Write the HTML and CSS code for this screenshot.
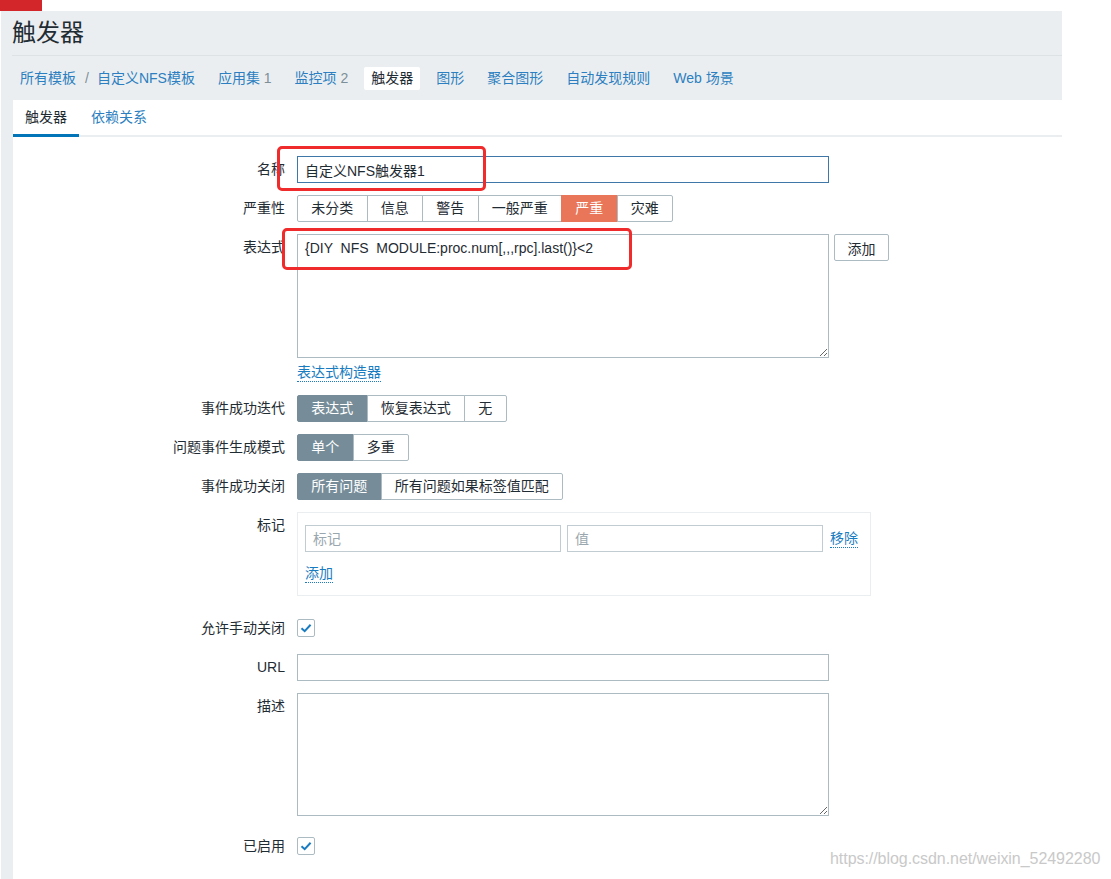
FILE: index.html
```html
<!DOCTYPE html>
<html lang="zh-CN">
<head>
<meta charset="utf-8">
<title>触发器</title>
<link rel="stylesheet" href="styles.css">
</head>
<body>
<div class="redmark"></div>
<div class="page">
  <header class="head"><h1>触发器</h1></header>
  <nav class="nav">
    <span class="navitem crumbs"><a>所有模板</a><span class="sep">/</span><a>自定义NFS模板</a></span>
    <a class="navitem">应用集 <span class="cnt">1</span></a>
    <a class="navitem">监控项 <span class="cnt">2</span></a>
    <a class="navitem sel">触发器</a>
    <a class="navitem">图形</a>
    <a class="navitem">聚合图形</a>
    <a class="navitem">自动发现规则</a>
    <a class="navitem">Web 场景</a>
  </nav>
  <main class="content">
    <div class="tabs">
      <span class="tab active">触发器</span>
      <span class="tab">依赖关系</span>
    </div>
    <form class="form">
      <label class="lbl">名称</label>
      <div class="ctl"><input class="inp focus" type="text" value="自定义NFS触发器1"></div>

      <label class="lbl">严重性</label>
      <div class="ctl"><div class="seg">
        <span>未分类</span><span>信息</span><span>警告</span><span>一般严重</span><span class="high">严重</span><span>灾难</span>
      </div></div>

      <label class="lbl">表达式</label>
      <div class="ctl">
        <div class="exprrow">
          <textarea class="ta expr">{DIY  NFS  MODULE:proc.num[,,,rpc].last()}&lt;2</textarea>
          <button type="button" class="btn">添加</button>
        </div>
        <a class="link builder">表达式构造器</a>
      </div>

      <label class="lbl">事件成功迭代</label>
      <div class="ctl"><div class="seg">
        <span class="on">表达式</span><span>恢复表达式</span><span>无</span>
      </div></div>

      <label class="lbl">问题事件生成模式</label>
      <div class="ctl"><div class="seg">
        <span class="on">单个</span><span>多重</span>
      </div></div>

      <label class="lbl">事件成功关闭</label>
      <div class="ctl"><div class="seg">
        <span class="on">所有问题</span><span>所有问题如果标签值匹配</span>
      </div></div>

      <label class="lbl">标记</label>
      <div class="ctl tagctl">
        <div class="tagbox">
          <div class="tagrow">
            <input class="inp tag" type="text" placeholder="标记">
            <input class="inp tag" type="text" placeholder="值">
            <a class="link">移除</a>
          </div>
          <a class="link add">添加</a>
        </div>
      </div>

      <label class="lbl">允许手动关闭</label>
      <div class="ctl"><span class="chk"><svg viewBox="0 0 16 16" width="16" height="16"><path d="M3.5 8.2 L6.7 11.2 L12.6 4.8" fill="none" stroke="#1a7cc0" stroke-width="2"/></svg></span></div>

      <label class="lbl">URL</label>
      <div class="ctl"><input class="inp" type="text"></div>

      <label class="lbl">描述</label>
      <div class="ctl"><textarea class="ta desc"></textarea></div>

      <label class="lbl push">已启用</label>
      <div class="ctl push"><span class="chk"><svg viewBox="0 0 16 16" width="16" height="16"><path d="M3.5 8.2 L6.7 11.2 L12.6 4.8" fill="none" stroke="#1a7cc0" stroke-width="2"/></svg></span></div>
    </form>
  </main>
</div>
<div class="annot a1"></div>
<div class="annot a2"></div>
<div class="watermark">https://blog.csdn.net/weixin_52492280</div>
</body>
</html>
```

FILE: styles.css
```css
* { box-sizing: border-box; }
html, body { margin: 0; padding: 0; background: #ffffff; }
body {
  font-family: "Liberation Sans", "Noto Sans CJK SC", sans-serif;
  font-size: 14px;
  color: #1f2c33;
  width: 1111px;
  height: 879px;
  overflow: hidden;
  position: relative;
}
.redmark { width: 42px; height: 11px; background: #d3262a; }
.page {
  width: 1061px;
  margin-left: 1px;
  background: #ebeef0;
  height: 868px;
  display: flex;
  flex-direction: column;
}
.head { margin-left: 11px; border-bottom: 1px solid #dde2e5; }
.head h1 {
  margin: 0;
  font-size: 24px;
  font-weight: normal;
  line-height: 44px;
  height: 44px;
  color: #1f2c33;
}
.nav {
  height: 44px;
  padding-left: 12px;
  display: flex;
  align-items: center;
  gap: 9px;
}
.navitem {
  padding: 0 7px;
  height: 23px;
  line-height: 23px;
  color: #2c7fc0;
  border-radius: 2px;
  white-space: nowrap;
}
.navitem .cnt { color: #7d8f99; }
.crumbs .sep { color: #7d8f99; margin: 0 8px 0 9px; }
.navitem.sel { background: #ffffff; color: #1f2c33; }
.content {
  margin-left: 12px;
  background: #ffffff;
  flex: 1;
}
.tabs {
  height: 37px;
  border-bottom: 2px solid #ebeef0;
  display: flex;
}
.tab {
  padding: 0 12px;
  line-height: 35px;
  color: #2c7fc0;
}
.tab.active {
  color: #1f2c33;
  border-bottom: 3px solid #0275b8;
  height: 37px;
  margin-bottom: -2px;
}
.form {
  display: grid;
  grid-template-columns: 272px 1fr;
  column-gap: 12px;
  row-gap: 12px;
  padding-top: 19px;
  align-items: start;
}
.lbl {
  text-align: right;
  line-height: 27px;
  white-space: nowrap;
}
.ctl { min-height: 27px; display: flex; flex-direction: column; align-items: flex-start; }
.inp {
  width: 532px;
  height: 27px;
  border: 1px solid #acbbc2;
  padding: 0 7px;
  font: inherit;
  color: #1f2c33;
  background: #fff;
  outline: none;
}
.inp.focus { border-color: #3f78a8; }
.inp::placeholder { color: #9aa7ae; }
.seg { display: flex; height: 27px; }
.seg span {
  border: 1px solid #acbbc2;
  padding: 0 13.25px;
  line-height: 25px;
  margin-left: -1px;
  background: #fff;
  white-space: nowrap;
}
.seg span:first-child { margin-left: 0; border-radius: 2px 0 0 2px; }
.seg span:last-child { border-radius: 0 2px 2px 0; }
.seg span.on { background: #768d99; border-color: #768d99; color: #fff; }
.seg span.high { background: #e97659; border-color: #e97659; color: #fff; }
.exprrow { display: flex; gap: 5px; align-items: flex-start; }
.ta {
  width: 532px;
  border: 1px solid #acbbc2;
  padding: 4px 7px;
  font: inherit;
  line-height: 18px;
  color: #1f2c33;
  white-space: pre;
  resize: both;
  outline: none;
  display: block;
}
.ta.expr { height: 124px; }
.ta.desc { height: 123px; }
.btn {
  height: 27px;
  width: 55px;
  border: 1px solid #acbbc2;
  border-radius: 2px;
  background: #fff;
  font: inherit;
  color: #1f2c33;
  padding: 0;
}
.link {
  color: #1a7cc0;
  border-bottom: 1px dotted #1a7cc0;
  line-height: 17px;
}
.builder { margin-top: 6px; margin-bottom: 1px; }
.tagctl { margin-bottom: 7px; }
.tagbox {
  width: 574px;
  border: 1px solid #ebeef0;
  padding: 12px 7px 12px 7px;
  display: flex;
  flex-direction: column;
  align-items: flex-start;
  gap: 13px;
}
.tagrow { display: flex; align-items: center; gap: 6px; }
.inp.tag { width: 256px; border-color: #c0ccd2; }
.tagrow .link { margin-left: 1px; }
.chk {
  width: 18px;
  height: 18px;
  border: 1px solid #acbbc2;
  border-radius: 2px;
  margin-top: 4px;
  display: flex;
  align-items: center;
  justify-content: center;
  background: #fff;
}
.push { margin-top: 5px; }
.annot {
  position: absolute;
  border: 3px solid #ef2b2b;
  border-radius: 5px;
}
.a1 { left: 277px; top: 146px; width: 209px; height: 45px; }
.a2 { left: 282px; top: 228px; width: 350px; height: 42px; }
.watermark {
  position: absolute;
  left: 830px;
  top: 850px;
  font-size: 16px;
  color: #c9c9c9;
  letter-spacing: -0.05px;
}
```
